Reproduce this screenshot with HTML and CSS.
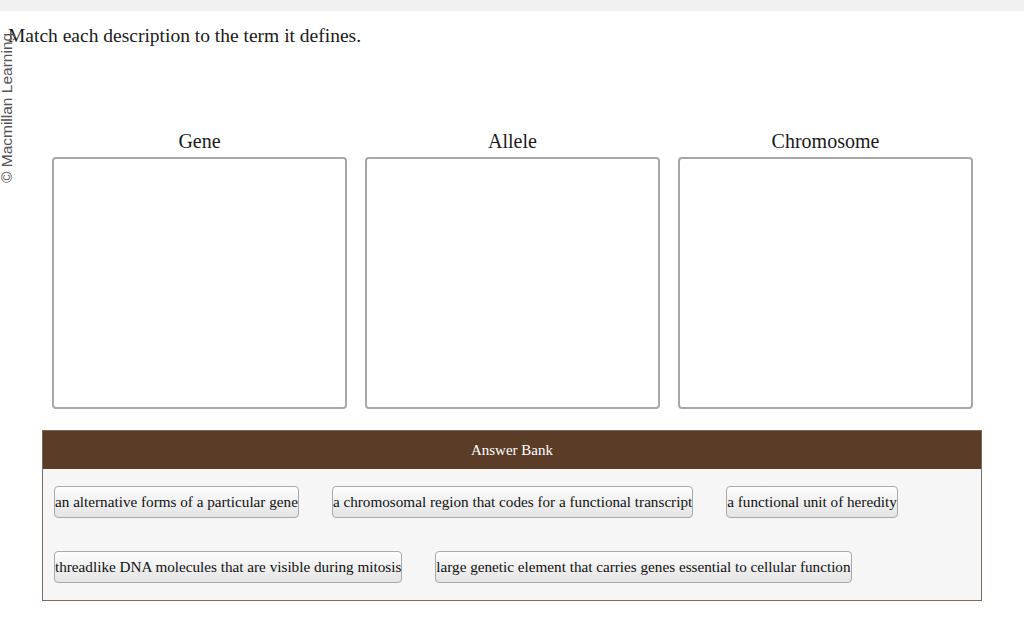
FILE: index.html
```html
<!DOCTYPE html>
<html lang="en">
<head>
    <meta charset="UTF-8">
    <title>Match Terms</title>
    <link rel="stylesheet" href="styles.css">
</head>
<body>
    <div class="top-bar"></div>

    <div class="page">
        <div class="credit">© Macmillan Learning</div>

        <p class="prompt">Match each description to the term it defines.</p>

        <div class="targets">
            <div class="target">
                <h3 class="target-title">Gene</h3>
                <div class="drop-box"></div>
            </div>
            <div class="target">
                <h3 class="target-title">Allele</h3>
                <div class="drop-box"></div>
            </div>
            <div class="target">
                <h3 class="target-title">Chromosome</h3>
                <div class="drop-box"></div>
            </div>
        </div>

        <div class="answer-bank">
            <div class="bank-header">Answer Bank</div>
            <div class="bank-items">
                <div class="chip">an alternative forms of a particular gene</div>
                <div class="chip">a chromosomal region that codes for a functional transcript</div>
                <div class="chip">a functional unit of heredity</div>
                <div class="chip">threadlike DNA molecules that are visible during mitosis</div>
                <div class="chip">large genetic element that carries genes essential to cellular function</div>
            </div>
        </div>
    </div>
</body>
</html>
```

FILE: styles.css
```css
body {
    margin: 0;
    padding: 0;
    background: #ffffff;
    font-family: 'Liberation Serif', 'Times New Roman', serif;
    color: #1a1a1a;
}

.top-bar {
    height: 11px;
    background: #f0f0f0;
}

.page {
    position: relative;
    padding: 0 0 0 8px;
}

/* rotated copyright along the left edge */
.credit {
    position: absolute;
    left: -71px;
    top: 86px;
    width: 156px;
    height: 16px;
    transform: rotate(-90deg);
    font-family: 'Liberation Sans', Arial, sans-serif;
    font-size: 15.5px;
    line-height: 16px;
    color: #555555;
    white-space: nowrap;
}

.prompt {
    margin: 0;
    padding-top: 13px;
    font-size: 19.5px;
    line-height: 24px;
}

.targets {
    display: flex;
    gap: 18px;
    margin: 82px 0 0 44px;
}

.target {
    width: 295px;
}

.target-title {
    margin: 0 0 4px;
    font-size: 20px;
    font-weight: normal;
    text-align: center;
    line-height: 23px;
}

.drop-box {
    height: 248px;
    border: 2px solid #a8a8a8;
    border-radius: 4px;
    background: #ffffff;
}

.answer-bank {
    width: 938px;
    margin: 21px 0 0 34px;
    border: 1px solid #7a6a5e;
    background: #f6f6f6;
}

.bank-header {
    background: #5b3c27;
    color: #ffffff;
    text-align: center;
    font-size: 15px;
    line-height: 38px;
    height: 38px;
}

.bank-items {
    display: flex;
    flex-wrap: wrap;
    gap: 33px 33px;
    padding: 17px 11px 17px 11px;
}

.chip {
    height: 30px;
    line-height: 30px;
    padding: 0;
    border: 1px solid #a9a9a9;
    border-radius: 4px;
    background: linear-gradient(#fdfdfd, #e4e4e4);
    font-size: 15.2px;
    color: #111111;
    white-space: nowrap;
}
```
